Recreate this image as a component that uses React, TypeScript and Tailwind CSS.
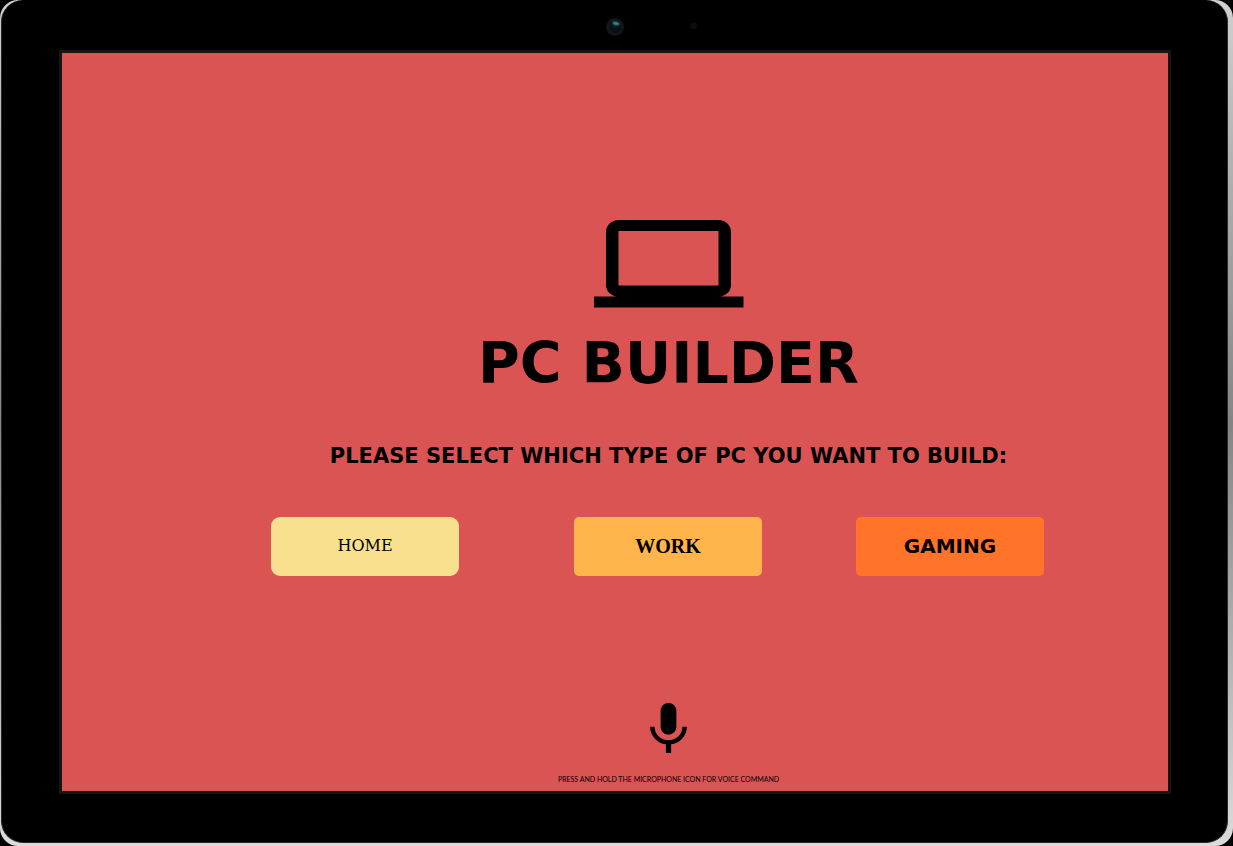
import React from "react";

function CameraBar() {
  return (
    <header className="flex h-[50px] items-center justify-center pt-[3px]">
      <svg width="176" height="24" viewBox="0 0 176 24" aria-hidden="true">
        <defs>
          <radialGradient id="lens" cx="0.5" cy="0.3" r="0.7">
            <stop offset="0" stopColor="#10262a" />
            <stop offset="0.5" stopColor="#0a1114" />
            <stop offset="1" stopColor="#0b0e11" />
          </radialGradient>
          <radialGradient id="glint">
            <stop offset="0" stopColor="#3f9a95" />
            <stop offset="0.6" stopColor="#235c5c" />
            <stop offset="1" stopColor="#10262a" stopOpacity="0" />
          </radialGradient>
        </defs>
        <circle cx="88" cy="12" r="9" fill="#121519" />
        <circle cx="88" cy="12" r="6" fill="url(#lens)" />
        <ellipse cx="89" cy="8.5" rx="5" ry="2.8" fill="url(#glint)" transform="rotate(12 89 8.5)" />
        <circle cx="166.5" cy="11" r="3.5" fill="#0c0c0c" />
      </svg>
    </header>
  );
}

function LaptopIcon() {
  return (
    <svg width="150" height="88" viewBox="0 0 150 88" aria-hidden="true">
      <path
        fillRule="evenodd"
        d="M24.500 0H124.500C131.500 0 137 5 137 12V65C137 71 132.500 75 127 76.500H149.500V87.500H0V76.500H22C16.500 75 12 71 12 65V12C12 5 17.500 0 24.500 0ZM24.500 11V65.500H124.500V11Z"
      />
    </svg>
  );
}

function MicIcon() {
  return (
    <svg width="37" height="50" viewBox="5 2 14 19" aria-hidden="true">
      <path d="M12 14c1.660 0 2.990-1.340 2.990-3L15 5c0-1.660-1.340-3-3-3S9 3.340 9 5v6c0 1.660 1.340 3 3 3zm5.300-3c0 3-2.540 5.100-5.300 5.100S6.700 14 6.700 11H5c0 3.410 2.720 6.230 6 6.720V21h2v-3.280c3.280-.480 6-3.300 6-6.720h-1.700z" />
    </svg>
  );
}

export default function App() {
  return (
    <div className="flex min-h-screen bg-black text-black">
      <div className="flex grow rounded-[18px] bg-linear-to-b from-[#d0d0d0] via-[#858585] to-[#dcdcdc] pr-[5px] pb-[3px] pl-px">
        <div className="flex grow flex-col rounded-[22px] border border-t-0 border-[#2a2a2a] bg-black pr-[56px] pb-[48px] pl-[57px]">
          <CameraBar />
          <main className="flex grow flex-col items-center border-[3px] border-[#151515] bg-[#db5454] pt-[167px] pl-[107px]">
            <LaptopIcon />
            <h1 className="mt-[23px] text-center font-['DejaVu_Sans',sans-serif] text-[57px] leading-[64px] font-bold">
              PC BUILDER
            </h1>
            <p className="mt-[47px] text-center font-['DejaVu_Sans',sans-serif] text-[21px] leading-7 font-bold">
              PLEASE SELECT WHICH TYPE OF PC YOU WANT TO BUILD:
            </p>
            <div className="mt-[47px] flex gap-[115px] pr-[22px]">
              <button
                type="button"
                className="h-[59px] w-[188px] cursor-pointer rounded-[9px] bg-[#f8e08e] pb-[2px] font-['DejaVu_Serif',serif] text-[16px]"
              >
                HOME
              </button>
              <div className="flex gap-[94px]">
                <button
                  type="button"
                  className="h-[59px] w-[188px] cursor-pointer rounded-[5px] bg-[#ffb54c] pb-[2px] font-['Liberation_Serif',serif] text-[20px] font-bold"
                >
                  WORK
                </button>
                <button
                  type="button"
                  className="h-[59px] w-[188px] cursor-pointer rounded-[5px] bg-[#ff7429] pb-[2px] font-['DejaVu_Sans',sans-serif] text-[20px] font-bold"
                >
                  GAMING
                </button>
              </div>
            </div>
            <button type="button" aria-label="Voice command" className="mt-auto cursor-pointer">
              <MicIcon />
            </button>
            <p className="mt-[21px] mb-[7px] text-center font-['Lato',sans-serif] text-[7px] leading-[10px]">
              PRESS AND HOLD THE MICROPHONE ICON FOR VOICE COMMAND
            </p>
          </main>
        </div>
      </div>
    </div>
  );
}
